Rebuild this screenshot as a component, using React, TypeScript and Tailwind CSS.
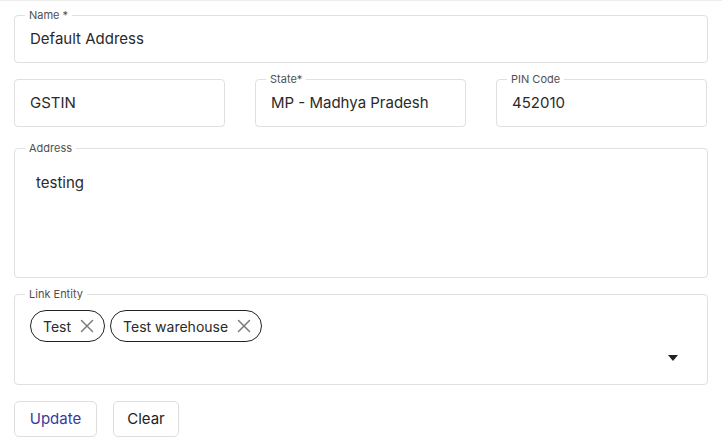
import { X } from 'lucide-react'

function Field({ label, value, className = '' }: { label?: string; value: string; className?: string }) {
  return (
    <div className={`relative h-[48px] rounded-[4px] border border-[#e0e0e0] flex items-center px-[15px] ${className}`}>
      {label && (
        <span className="absolute -top-[8px] left-[10px] bg-white px-[4px] text-[11px] leading-[14px] text-[#505050]">{label}</span>
      )}
      <span className="text-[15px] text-[#2a2a2a]">{value}</span>
    </div>
  )
}

function Chip({ label }: { label: string }) {
  return (
    <div className="h-[32px] rounded-full border border-[#222] flex items-center pl-[12px] pr-[6px] gap-[5px]">
      <span className="text-[14px] text-[#2a2a2a]">{label}</span>
      <X className="w-[22px] h-[22px] text-[#7a7a7a]" strokeWidth={1.6} />
    </div>
  )
}

export default function App() {
  return (
    <div className="w-[722px] h-[448px] bg-white border-t border-[#ececec] px-[14px] pt-[14px]" style={{ fontFamily: 'Inter, "Liberation Sans", sans-serif' }}>
      <Field label="Name *" value="Default Address" />

      <div className="grid grid-cols-[211px_211px_211px] gap-[30px] mt-[16px]">
        <Field value="GSTIN" />
        <Field label="State*" value="MP - Madhya Pradesh" />
        <Field label="PIN Code" value="452010" />
      </div>

      <div className="relative mt-[21px] h-[130px] rounded-[4px] border border-[#e0e0e0] pl-[21px] pt-[21px]">
        <span className="absolute -top-[8px] left-[10px] bg-white px-[4px] text-[11px] leading-[14px] text-[#505050]">Address</span>
        <span className="text-[15px] text-[#2a2a2a]">testing</span>
      </div>

      <div className="relative mt-[16px] h-[91px] rounded-[4px] border border-[#e0e0e0] pl-[15px] pt-[15px] pr-[28px]">
        <span className="absolute -top-[8px] left-[10px] bg-white px-[4px] text-[11px] leading-[14px] text-[#505050]">Link Entity</span>
        <div className="flex gap-[5px]">
          <Chip label="Test" />
          <Chip label="Test warehouse" />
        </div>
        <div className="flex justify-end mt-[13px]">
          <svg width="12" height="6" viewBox="0 0 12 6">
            <path d="M1 0 L11 0 L6 6 Z" fill="#222" />
          </svg>
        </div>
      </div>

      <div className="flex gap-[16px] mt-[16px]">
        <button className="h-[36px] w-[83px] rounded-[5px] border border-[#dedede] text-[15px] text-[#3a3a9a]">Update</button>
        <button className="h-[36px] w-[66px] rounded-[5px] border border-[#dedede] text-[15px] text-[#222]">Clear</button>
      </div>
    </div>
  )
}
